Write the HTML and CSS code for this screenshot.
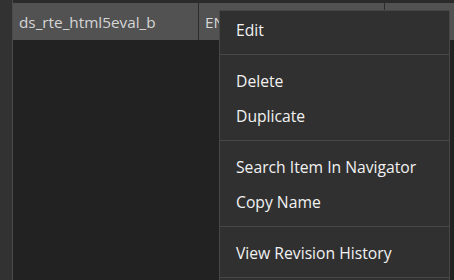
FILE: index.html
```html
<!DOCTYPE html>
<html lang="en">
<head>
    <meta charset="UTF-8">
    <title>Item list context menu</title>
    <link rel="stylesheet" href="styles.css">
</head>
<body>
    <div class="frame">
        <div class="gutter"></div>
        <div class="table">
            <div class="row">
                <div class="cell name">ds_rte_html5eval_b</div>
                <div class="cell lang">EN</div>
                <div class="cell extra">—</div>
            </div>
            <div class="empty"></div>
        </div>
    </div>

    <div class="menu">
        <div class="group">
            <div class="item">Edit</div>
        </div>
        <div class="group">
            <div class="item">Delete</div>
            <div class="item">Duplicate</div>
        </div>
        <div class="group">
            <div class="item">Search Item In Navigator</div>
            <div class="item">Copy Name</div>
        </div>
        <div class="group">
            <div class="item">View Revision History</div>
        </div>
    </div>
</body>
</html>
```

FILE: styles.css
```css
body {
    margin: 0;
    background: #222222;
    font-family: 'Open Sans', 'Noto Sans', sans-serif;
    height: 280px;
    overflow: hidden;
}
.frame {
    display: flex;
    height: 280px;
}
.gutter {
    width: 12px;
    background: #323232;
    border-right: 1px solid #4b4b4b;
}
.table {
    flex: 1;
    display: flex;
    flex-direction: column;
}
.row {
    display: flex;
    height: 37px;
    border-top: 3px solid #2b2b2b;
    background: #525252;
}
.cell {
    display: flex;
    align-items: center;
    padding-left: 6px;
    color: #d6d6d6;
    font-size: 15.3px;
    border-right: 1px solid #2b2b2b;
    white-space: nowrap;
    overflow: hidden;
}
.name {
    width: 179px;
}
.lang {
    width: 179px;
}
.extra {
    flex: 1;
    border-right: none;
}
.empty {
    flex: 1;
    background: #222222;
}
/* context menu, cut off by the bottom of the window */
.menu {
    position: absolute;
    left: 219px;
    top: 10px;
    width: 229px;
    height: 269px;
    overflow: hidden;
    background: #303030;
    border: 1px solid #474747;
    border-bottom: none;
    color: #f2f2f2;
    font-size: 15.7px;
}
.group {
    padding: 9px 0 6px;
    border-top: 1px solid #474747;
}
.group:first-child {
    border-top: none;
    padding-top: 2px;
}
.group:last-child {
    border-bottom: 1px solid #474747;
}
.item {
    height: 35px;
    line-height: 35px;
    padding-left: 16px;
}
```
